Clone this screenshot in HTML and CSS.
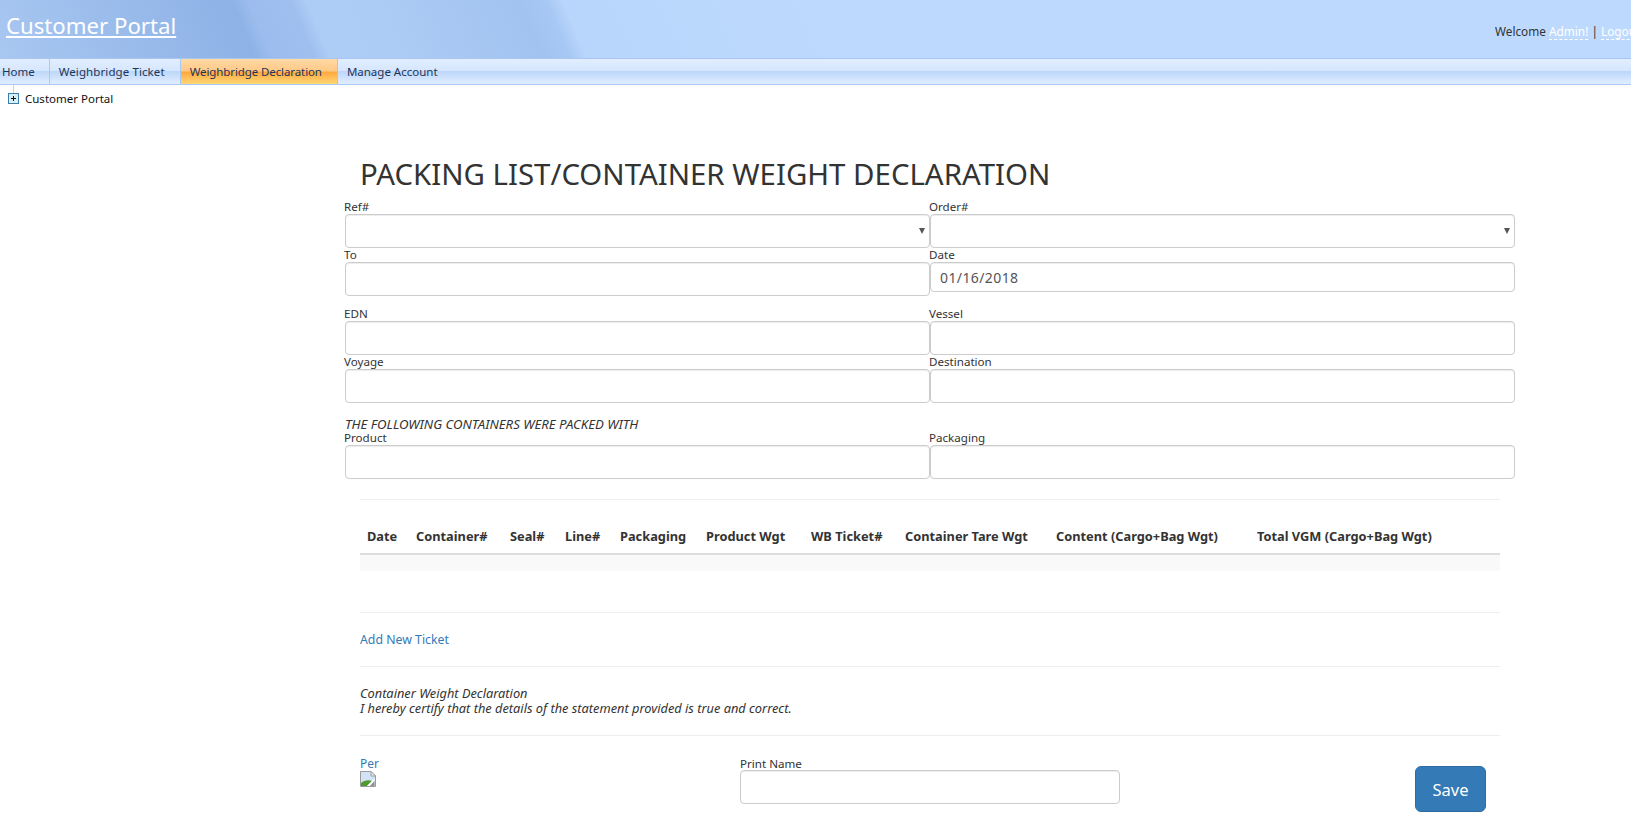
FILE: index.html
```html
<!DOCTYPE html>
<html lang="en">
<head>
    <meta charset="UTF-8">
    <title>Customer Portal</title>
    <link rel="stylesheet" href="styles.css">
</head>
<body>
    <header class="top-bar">
        <a class="site-title" href="#">Customer Portal</a>
        <div class="welcome">Welcome <a href="#">Admin!</a> | <a href="#">Logout</a></div>
    </header>
    <nav class="menu">
        <a class="menu-item menu-home" href="#">Home</a>
        <a class="menu-item menu-ticket" href="#">Weighbridge Ticket</a>
        <a class="menu-item active" href="#">Weighbridge Declaration</a>
        <a class="menu-item plain" href="#">Manage Account</a>
    </nav>
    <div class="tree">
        <span class="tree-toggle"></span>
        <span>Customer Portal</span>
    </div>

    <main class="sheet">
        <h1>PACKING LIST/CONTAINER WEIGHT DECLARATION</h1>

        <div class="form-grid top">
            <div class="field">
                <label>Ref#</label>
                <div class="select-box"></div>
            </div>
            <div class="field">
                <label>Order#</label>
                <div class="select-box"></div>
            </div>
            <div class="field">
                <label>To</label>
                <input type="text">
            </div>
            <div class="field">
                <label>Date</label>
                <input type="text" class="short" value="01/16/2018">
            </div>
        </div>

        <div class="form-grid spaced">
            <div class="field">
                <label>EDN</label>
                <input type="text">
            </div>
            <div class="field">
                <label>Vessel</label>
                <input type="text">
            </div>
            <div class="field">
                <label>Voyage</label>
                <input type="text">
            </div>
            <div class="field">
                <label>Destination</label>
                <input type="text">
            </div>
        </div>

        <p class="packed-with">THE FOLLOWING CONTAINERS WERE PACKED WITH</p>
        <div class="form-grid">
            <div class="field">
                <label>Product</label>
                <input type="text">
            </div>
            <div class="field">
                <label>Packaging</label>
                <input type="text">
            </div>
        </div>

        <div class="inner">
            <hr class="first">
            <table class="tickets">
                <thead>
                    <tr>
                        <th class="c-date">Date</th>
                        <th class="c-container">Container#</th>
                        <th class="c-seal">Seal#</th>
                        <th class="c-line">Line#</th>
                        <th class="c-pack">Packaging</th>
                        <th class="c-wgt">Product Wgt</th>
                        <th class="c-ticket">WB Ticket#</th>
                        <th class="c-tare">Container Tare Wgt</th>
                        <th class="c-content">Content (Cargo+Bag Wgt)</th>
                        <th>Total VGM (Cargo+Bag Wgt)</th>
                    </tr>
                </thead>
                <tbody>
                    <tr><td colspan="10"></td></tr>
                </tbody>
            </table>
            <hr class="after-table">
            <a class="add-ticket" href="#">Add New Ticket</a>
            <hr class="after-add">
            <p class="certify">Container Weight Declaration<br>I hereby certify that the details of the statement provided is true and correct.</p>
            <hr class="after-certify">
            <div class="sign-row">
                <div class="per">
                    <a href="#">Per</a>
                    <svg class="broken-img" width="16" height="16" viewBox="0 0 16 16">
                        <path d="M0.5 0.5H11L15.5 5V15.5H0.5Z" fill="#d3e2f6" stroke="#9a9a9a"/>
                        <path d="M11 0.5V5H15.5Z" fill="#f4f4f4" stroke="#9a9a9a"/>
                        <path d="M1 15V12C4 9.5 8 8.5 12 10L7 15Z" fill="#4f9a2c"/>
                        <path d="M7 15L14.5 7.5V10L10 15Z" fill="#fff"/>
                        <path d="M10 15L14.5 10V15Z" fill="#8f8f8f"/>
                    </svg>
                </div>
                <div class="print-name">
                    <label>Print Name</label>
                    <input type="text">
                </div>
                <button class="save" type="button">Save</button>
            </div>
        </div>
    </main>
</body>
</html>
```

FILE: styles.css
```css
body {
    margin: 0;
    font-family: "Noto Sans", sans-serif;
    font-size: 13px;
    color: #333;
    background: #fff;
    overflow-x: hidden;
}
a {
    text-decoration: none;
}

/* header */
.top-bar {
    height: 59px;
    box-sizing: border-box;
    display: flex;
    justify-content: space-between;
    align-items: center;
    padding: 0 0 0 6px;
    border-bottom: 1px solid #a9c6f2;
    background: linear-gradient(67deg, #a8c7f1 0, #8eb2e6 235px, #9bbced 250px, #9fbfef 290px, #aecdf6 305px, #adccf5 360px, #a2c2f0 500px, #a7c8f4 525px, #b8d5fb 540px, #bddafe 800px);
}
.site-title {
    align-self: flex-start;
    color: #fff;
    font-size: 22.2px;
    text-decoration: underline;
    line-height: 51px;
}
.welcome {
    width: 136px;
    white-space: nowrap;
    overflow: hidden;
    flex-shrink: 0;
    color: #333;
    font-size: 11.8px;
    line-height: 22px;
    margin-top: 3px;
}
.welcome a {
    color: #fff;
    border-bottom: 1px dashed #fff;
}

/* menu */
.menu {
    display: flex;
    height: 26px;
    box-sizing: border-box;
    border-bottom: 1px solid #a9c9f5;
    background: linear-gradient(#e2eeff 0, #d5e6fe 48%, #bcd7fa 50%, #d2e4fd 78%, #e0edff 100%);
}
.menu-item {
    padding: 0 14px 0 9px;
    font-size: 11.5px;
    line-height: 25px;
    color: #1f3557;
    border-right: 1px solid #a9c9f5;
}
.menu-home {
    padding-left: 2px;
}
.menu-ticket {
    padding-right: 15px;
    letter-spacing: 0.1px;
}
.menu-item.plain {
    border-right: none;
}
.menu-item.active {
    padding-right: 15px;
    letter-spacing: -0.1px;
    background: linear-gradient(#ffd9a4 0, #ffc987 48%, #ffa83f 52%, #ffc45e 80%, #ffd877 100%);
}

/* tree */
.tree {
    display: flex;
    align-items: center;
    gap: 6px;
    height: 25px;
    padding: 1px 0 0 8px;
    font-size: 11.5px;
    color: #111;
}
.tree-toggle {
    position: relative;
    width: 11px;
    height: 11px;
    box-sizing: border-box;
    border: 1px solid #3b7ea8;
    background:
        linear-gradient(#111, #111) center / 5px 1px no-repeat,
        linear-gradient(#111, #111) center / 1px 5px no-repeat,
        #d9edf7;
}
.tree-toggle::before {
    content: "";
    position: absolute;
    left: 4px;
    top: -9px;
    height: 8px;
    border-left: 1px solid #c5d5e8;
}

/* form */
.sheet {
    width: 1170px;
    margin-left: 345px;
}
h1 {
    margin: 43px 0 0 15px;
    font-size: 29.4px;
    font-weight: 400;
    line-height: 40px;
    color: #333;
}
.form-grid {
    display: grid;
    grid-template-columns: 585px 585px;
    row-gap: 0;
}
.form-grid.top {
    margin-top: 6px;
}
.form-grid.spaced {
    margin-top: 11px;
}
.field {
    display: flex;
    flex-direction: column;
}
label {
    display: block;
    font-size: 11.6px;
    line-height: 13px;
    margin: 0 0 1px -1px;
    white-space: nowrap;
}
input {
    display: block;
    width: 100%;
    height: 34px;
    box-sizing: border-box;
    padding: 6px 9px;
    border: 1px solid #ccc;
    border-radius: 4px;
    box-shadow: inset 0 1px 1px rgba(0,0,0,0.075);
    font-family: inherit;
    font-size: 14px;
    color: #555;
    letter-spacing: 0.4px;
}
input.short {
    height: 30px;
}
.select-box {
    position: relative;
    height: 34px;
    box-sizing: border-box;
    border: 1px solid #ccc;
    border-radius: 4px;
    box-shadow: inset 0 1px 1px rgba(0,0,0,0.075);
}
.select-box::after {
    content: "";
    position: absolute;
    right: 4px;
    top: 13px;
    border-left: 3px solid transparent;
    border-right: 3px solid transparent;
    border-top: 6px solid #555;
}
.packed-with {
    margin: 15px 0 0;
    font-size: 13.2px;
    font-style: italic;
    line-height: 13px;
    white-space: nowrap;
}

/* lower part */
.inner {
    margin: 0 15px;
}
hr {
    margin: 0;
    border: none;
    border-top: 1px solid #eee;
}
hr.first {
    margin-top: 20px;
}
.tickets {
    width: 100%;
    margin-top: 20px;
    border-collapse: collapse;
    table-layout: fixed;
}
.tickets th {
    box-sizing: border-box;
    height: 34px;
    padding: 0 0 1px 7px;
    text-align: left;
    font-size: 12.8px;
    font-weight: 700;
    white-space: nowrap;
    border-bottom: 2px solid #ddd;
}
.tickets td {
    height: 16px;
    padding: 0;
    background: #f9f9f9;
}
.c-date { width: 49px; }
.c-container { width: 94px; }
.c-seal { width: 55px; }
.c-line { width: 55px; }
.c-pack { width: 86px; }
.c-wgt { width: 105px; }
.c-ticket { width: 94px; }
.c-tare { width: 151px; }
.c-content { width: 201px; }
hr.after-table {
    margin-top: 41px;
}
.add-ticket {
    display: block;
    margin-top: 19px;
    font-size: 12.3px;
    line-height: 16px;
    color: #337ab7;
}
hr.after-add {
    margin-top: 18px;
}
.certify {
    margin: 19px 0 0;
    font-style: italic;
    font-size: 12.8px;
    line-height: 15px;
    white-space: nowrap;
}
hr.after-certify {
    margin-top: 19px;
}
.sign-row {
    display: flex;
    margin-top: 20px;
    align-items: flex-start;
}
.per {
    width: 380px;
    margin-top: 1px;
    font-size: 12px;
    line-height: 14px;
}
.per a {
    display: block;
    color: #337ab7;
}
.broken-img {
    display: block;
}
.print-name {
    width: 380px;
}
.print-name label {
    line-height: 12px;
    margin-top: 2px;
    margin-bottom: 0;
    margin-left: 0;
}
.save {
    margin: 10px 0 0 295px;
    width: 71px;
    height: 46px;
    border: 1px solid #2e6da4;
    border-radius: 6px;
    background: #337ab7;
    color: #fff;
    font-family: inherit;
    font-size: 16.5px;
}
```
